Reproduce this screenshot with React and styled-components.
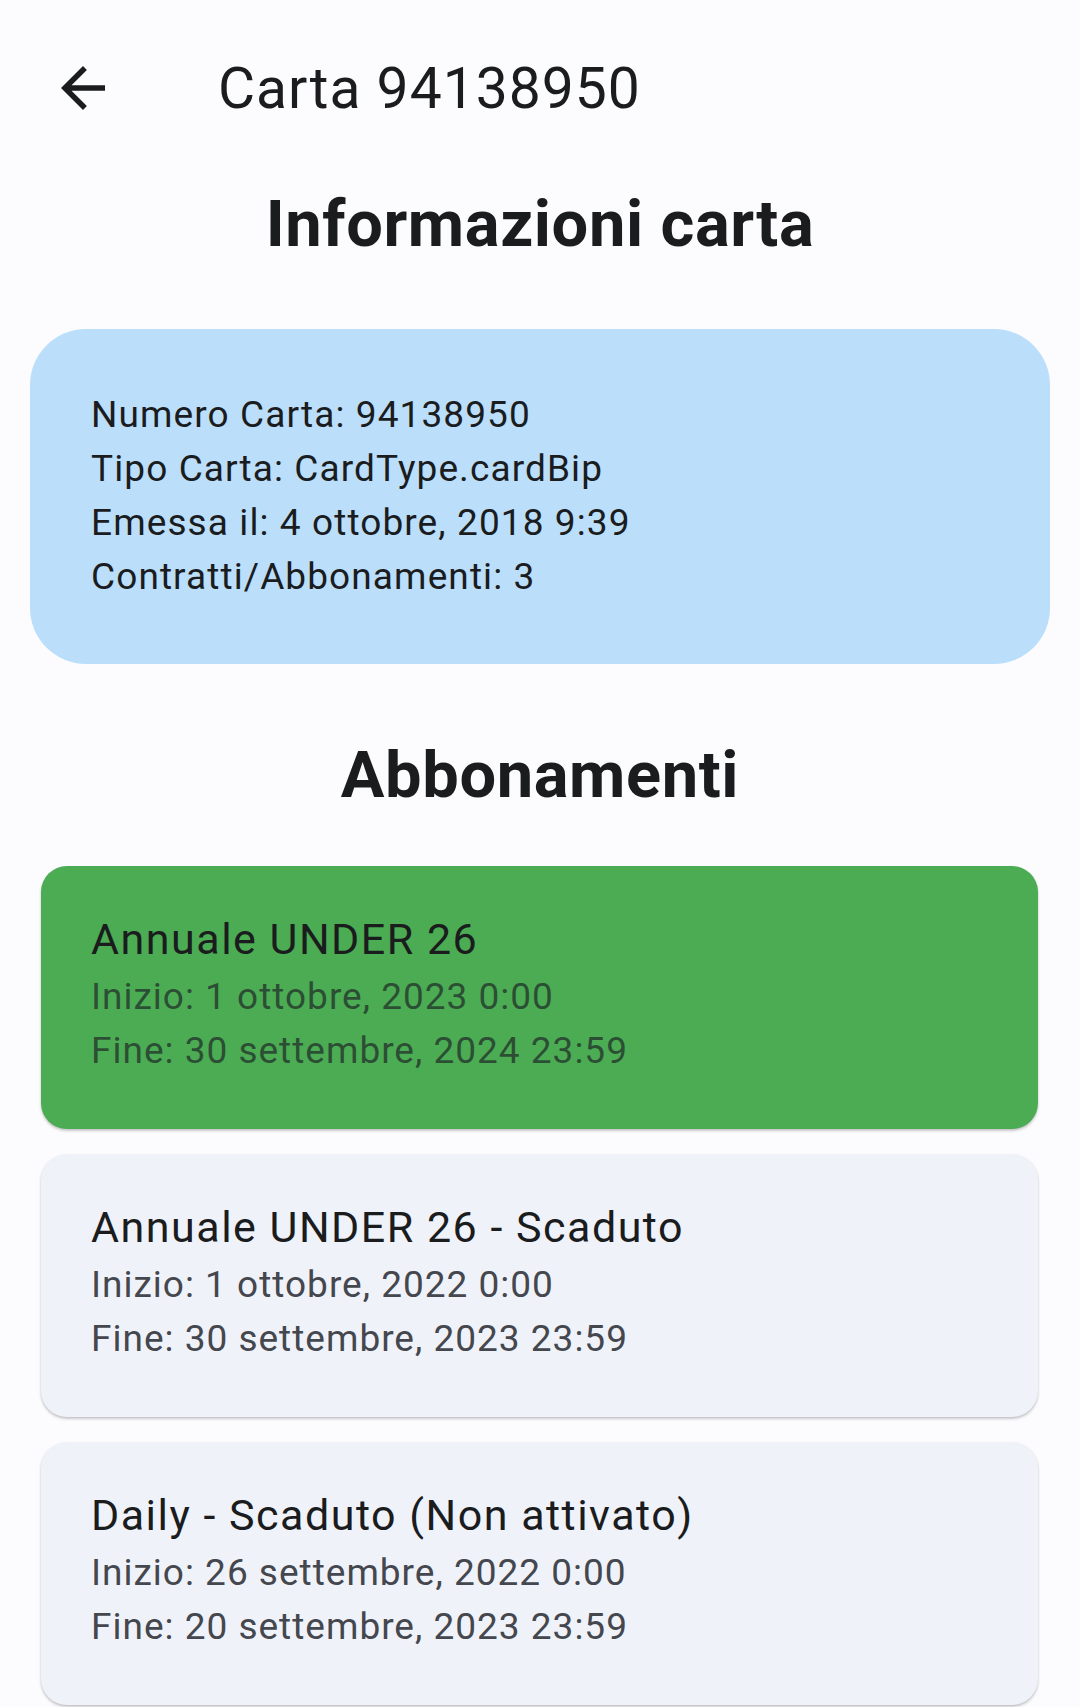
import React from "react";
import styled, { createGlobalStyle } from "styled-components";

const Global = createGlobalStyle`
  html, body {
    margin: 0;
    padding: 0;
    background: #fcfcff;
  }
  body {
    font-family: Roboto, "Noto Sans", "Liberation Sans", sans-serif;
    color: #1a1c1e;
    -webkit-font-smoothing: antialiased;
  }
`;

const Page = styled.div`
  width: 1080px;
  min-height: 1707px;
  background: #fcfcff;
  display: flex;
  flex-direction: column;
`;

const AppBar = styled.header`
  height: 176px;
  display: flex;
  align-items: center;
  padding-left: 50px;
  box-sizing: border-box;
`;

const BackButton = styled.button`
  width: 66px;
  height: 66px;
  padding: 0;
  border: 0;
  background: transparent;
  color: #1a1c1e;
  display: flex;
  align-items: center;
  justify-content: center;
  margin-right: 102px;
  svg {
    width: 66px;
    height: 66px;
    display: block;
  }
`;

const AppTitle = styled.h1`
  margin: 0;
  font-size: 57px;
  font-weight: 400;
  letter-spacing: 1px;
  color: #1a1c1e;
  line-height: 1;
`;

const SectionTitle = styled.h2`
  margin: ${(p) => p.$margin};
  text-align: center;
  font-size: 65px;
  font-weight: 700;
  letter-spacing: 0.6px;
  line-height: 77px;
  color: #1a1c1e;
`;

const InfoCard = styled.section`
  margin: 0 30px;
  background: #bbdefb;
  border-radius: 56px;
  padding: 59px 40px 60px 61px;
  display: flex;
  flex-direction: column;
`;

const InfoLine = styled.div`
  font-size: 37px;
  line-height: 54px;
  letter-spacing: 1.1px;
  color: #1a1c1e;
`;

const CardList = styled.div`
  margin: 0 42px 0 41px;
  display: flex;
  flex-direction: column;
  gap: 25px;
`;

const SubCard = styled.article`
  background: ${(p) => (p.$active ? "#4bac53" : "#f0f2f9")};
  border-radius: 26px;
  padding: 45px 40px 51px 50px;
  box-shadow: 0 2px 3px rgba(0, 0, 0, 0.18), 0 1px 2px rgba(0, 0, 0, 0.08);
  display: flex;
  flex-direction: column;
`;

const SubTitle = styled.div`
  font-size: 43px;
  line-height: 56px;
  letter-spacing: 1.5px;
  color: #1a1c1e;
  margin-bottom: 3px;
`;

const SubLine = styled.div`
  font-size: 37px;
  line-height: 54px;
  letter-spacing: 1px;
  color: ${(p) => (p.$active ? "rgba(28, 30, 36, 0.68)" : "#44474e")};
`;

const ArrowBack = () => (
  <svg viewBox="0 0 24 24" aria-hidden="true">
    <path
      fill="currentColor"
      d="M20 11H7.83l5.59-5.59L12 4l-8 8 8 8 1.41-1.41L7.83 13H20v-2z"
    />
  </svg>
);

const info = [
  "Numero Carta: 94138950",
  "Tipo Carta: CardType.cardBip",
  "Emessa il: 4 ottobre, 2018 9:39",
  "Contratti/Abbonamenti: 3",
];

const subs = [
  {
    title: "Annuale UNDER 26",
    start: "Inizio: 1 ottobre, 2023 0:00",
    end: "Fine: 30 settembre, 2024 23:59",
    active: true,
  },
  {
    title: "Annuale UNDER 26 - Scaduto",
    start: "Inizio: 1 ottobre, 2022 0:00",
    end: "Fine: 30 settembre, 2023 23:59",
    active: false,
  },
  {
    title: "Daily - Scaduto (Non attivato)",
    start: "Inizio: 26 settembre, 2022 0:00",
    end: "Fine: 20 settembre, 2023 23:59",
    active: false,
  },
];

export default function App() {
  return (
    <>
      <Global />
      <Page>
        <AppBar>
          <BackButton aria-label="Indietro">
            <ArrowBack />
          </BackButton>
          <AppTitle>Carta 94138950</AppTitle>
        </AppBar>
        <SectionTitle $margin="10px 0 66px">Informazioni carta</SectionTitle>
        <InfoCard>
          {info.map((t) => (
            <InfoLine key={t}>{t}</InfoLine>
          ))}
        </InfoCard>
        <SectionTitle $margin="73px 0 52px">Abbonamenti</SectionTitle>
        <CardList>
          {subs.map((s) => (
            <SubCard key={s.title} $active={s.active}>
              <SubTitle>{s.title}</SubTitle>
              <SubLine $active={s.active}>{s.start}</SubLine>
              <SubLine $active={s.active}>{s.end}</SubLine>
            </SubCard>
          ))}
        </CardList>
      </Page>
    </>
  );
}
